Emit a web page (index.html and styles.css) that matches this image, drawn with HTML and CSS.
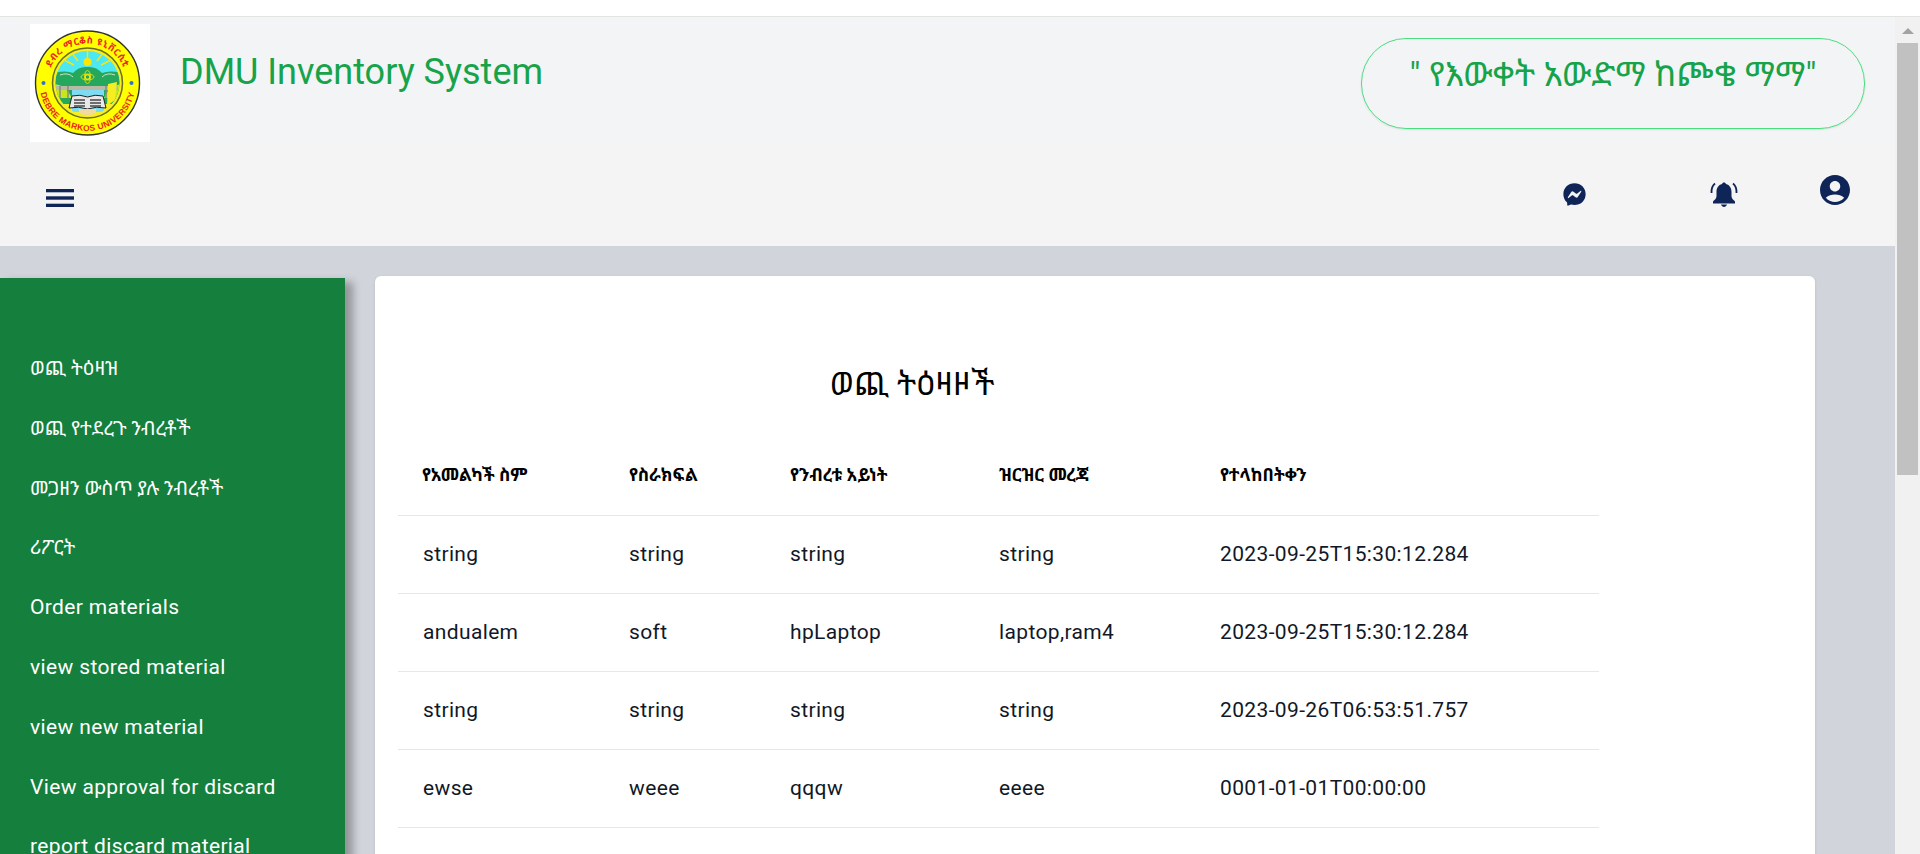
FILE: index.html
```html
<!DOCTYPE html>
<html lang="am">
<head>
<meta charset="utf-8">
<title>DMU Inventory System</title>
<link rel="stylesheet" href="styles.css">
</head>
<body>
<div class="topstrip"></div>
<div class="frame">
  <div class="page">
    <header class="header">
      <div class="brand">
        <div class="brand-left">
          <svg class="logo" viewBox="0 0 120 118" aria-label="Debre Markos University logo">
            <rect width="120" height="118" fill="#fff"/>
            <defs>
              <path id="arcTop" d="M18 59a39.500 39.500 0 0 1 79 0"/>
              <path id="arcBottom" d="M9.500 59a48 48 0 0 0 96 0"/>
              <clipPath id="inner"><circle cx="57.500" cy="59" r="32"/></clipPath>
            </defs>
            <circle cx="57.500" cy="59" r="52" fill="#ffff00" stroke="#333" stroke-width="1.400"/>
            <circle cx="57.500" cy="59" r="35" fill="#f5ee20" stroke="#6b6b2a" stroke-width="1.500"/>
            <g clip-path="url(#inner)">
              <rect x="24" y="24" width="68" height="36" fill="#4ee8f2"/>
              <circle cx="57.500" cy="38" r="4" fill="#ffe600"/>
              <path d="M57.500 35V27M48 37l-6-8M67 37l6-8M44 41l-10-5M71 41l10-5" stroke="#ffe600" stroke-width="1.400"/>
              <path d="M24 49q12-3 19 0q6-7 14.500-6q8.500-1 14.500 6q8-3 20 0v31H24z" fill="#25a85c"/>
              <path d="M24 60q12 1 18 14H24zM92 60q-12 1-18 14h18z" fill="#c8e620"/>
              <path d="M30 51q8-3 13 2M85 51q-8-3-13 2" stroke="#e8f8e8" stroke-width=".8" fill="none"/>
              <circle cx="57.500" cy="53" r="2.300" fill="none" stroke="#ffe600" stroke-width="1.200"/>
              <ellipse cx="57.500" cy="53" rx="6.500" ry="3" fill="none" stroke="#ffe600" stroke-width=".8"/>
              <ellipse cx="57.500" cy="53" rx="3" ry="6.500" fill="none" stroke="#ffe600" stroke-width=".8"/>
              <rect x="26" y="62" width="62" height="4" fill="#b9b9a8"/>
              <path d="M30 62v12M38 62v12M76 62v12M84 62v12" stroke="#888" stroke-width="1.500"/>
              <rect x="42" y="66" width="32" height="22" fill="#7fdcf0"/>
              <path d="M78 60l9-2-2 18-8 6z" fill="#f5ee20"/>
              <path d="M39 84l3-12q8-2 15.500 1q7.500-3 15.500-1l3 12q-10-2-18.500 1q-8.500-3-18.500-1z" fill="#e8e8e8" stroke="#222" stroke-width="1"/>
              <path d="M44 76h11M44 79h11M44 82h11M60 76h11M60 79h11M60 82h11" stroke="#444" stroke-width="1.500"/>
              <rect x="49" y="85" width="17" height="6" fill="#f1d9a4"/>
            </g>
            <circle cx="13.500" cy="59" r="2" fill="#2f6fd8"/>
            <circle cx="101.500" cy="59" r="2" fill="#2f6fd8"/>
            <text class="logo-text"><textPath href="#arcTop" startOffset="50%" text-anchor="middle">ደብረ ማርቆስ ዩኒቨርሲቲ</textPath></text>
            <text class="logo-text logo-latin"><textPath href="#arcBottom" startOffset="50%" text-anchor="middle">DEBRE MARKOS UNIVERSITY</textPath></text>
          </svg>
          <h1 class="title">DMU Inventory System</h1>
        </div>
        <div class="motto">" የእውቀት አውድማ ከጮቄ ማማ"</div>
      </div>
      <nav class="nav">
        <svg class="menu-icon" viewBox="0 0 28 18" aria-label="menu">
          <rect width="28" height="3.300" fill="#0f2557"/>
          <rect y="7.300" width="28" height="3.400" fill="#0f2557"/>
          <rect y="14.700" width="28" height="3.300" fill="#0f2557"/>
        </svg>
        <div class="nav-icons">
          <svg class="ic-msg" viewBox="0 0 512 512" aria-label="messages"><path fill="#0f2557" d="M256.55 8C116.52 8 8 110.34 8 248.57c0 72.3 29.71 134.78 78.07 177.94 8.35 7.51 6.63 11.86 8.05 58.23A19.92 19.92 0 0 0 122 502.31c52.91-23.3 53.59-25.14 62.56-22.7C337.85 521.8 504 423.7 504 248.57 504 110.34 396.59 8 256.55 8zm149.24 185.13l-73 115.57a37.37 37.37 0 0 1-53.91 9.93l-58.08-43.47a15 15 0 0 0-18 0l-78.37 59.44c-10.46 7.93-24.16-4.6-17.11-15.67l73-115.57a37.36 37.36 0 0 1 53.91-9.93l58.06 43.46a15 15 0 0 0 18 0l78.41-59.38c10.44-7.98 24.14 4.54 17.09 15.62z"/></svg>
          <svg class="ic-bell" viewBox="0 0 28 25" aria-label="notifications">
            <path fill="#0f2557" d="M14 .5c-1 0-1.800.6-2 1.500-3.700 1-5.500 4-5.500 8v4c0 2.500-2 4-3.500 5.500v2h22v-2c-1.500-1.500-3.500-3-3.500-5.500v-4c0-4-1.800-7-5.500-8-.2-.9-1-1.500-2-1.500z"/>
            <path fill="#0f2557" d="M11 22.500h6c-.5 1.500-1.700 2.500-3 2.500s-2.500-1-3-2.500z"/>
            <path fill="none" stroke="#0f2557" stroke-width="1.800" d="M5 1.500C2.500 3.500 1.300 7 1.500 11M23 1.500c2.500 2 3.700 5.500 3.500 9.500"/>
          </svg>
          <svg class="ic-user" viewBox="2 2 20 20" aria-label="account"><path fill="#0f2557" d="M12 2C6.480 2 2 6.480 2 12s4.480 10 10 10 10-4.480 10-10S17.520 2 12 2zm0 4c1.930 0 3.500 1.570 3.500 3.500S13.930 13 12 13s-3.500-1.570-3.500-3.500S10.070 6 12 6zm0 14c-2.030 0-4.430-.82-6.140-2.880C7.550 15.800 9.680 15 12 15s4.450.8 6.140 2.120C16.430 19.180 14.030 20 12 20z"/></svg>
        </div>
      </nav>
    </header>
    <div class="main">
      <aside class="sidebar">
        <ul class="side-list">
          <li class="side-am">ወጪ ትዕዛዝ</li>
          <li class="side-am">ወጪ የተደረጉ ንብረቶች</li>
          <li class="side-am">መጋዘን ውስጥ ያሉ ንብረቶች</li>
          <li class="side-am">ሪፖርት</li>
          <li>Order materials</li>
          <li>view stored material</li>
          <li>view new material</li>
          <li>View approval for discard</li>
          <li>report discard material</li>
        </ul>
      </aside>
      <section class="card">
        <h2 class="card-title">ወጪ ትዕዛዞች</h2>
        <table class="orders">
          <thead>
            <tr><th>የአመልካች ስም</th><th>የስራክፍል</th><th>የንብረቱ አይነት</th><th>ዝርዝር መረጃ</th><th>የተላከበትቀን</th></tr>
          </thead>
          <tbody>
            <tr><td>string</td><td>string</td><td>string</td><td>string</td><td>2023-09-25T15:30:12.284</td></tr>
            <tr><td>andualem</td><td>soft</td><td>hpLaptop</td><td>laptop,ram4</td><td>2023-09-25T15:30:12.284</td></tr>
            <tr><td>string</td><td>string</td><td>string</td><td>string</td><td>2023-09-26T06:53:51.757</td></tr>
            <tr><td>ewse</td><td>weee</td><td>qqqw</td><td>eeee</td><td>0001-01-01T00:00:00</td></tr>
          </tbody>
        </table>
      </section>
    </div>
  </div>
  <div class="scrollbar">
    <div class="scroll-arrow"></div>
    <div class="scroll-thumb"></div>
  </div>
</div>
</body>
</html>
```
FILE: styles.css
```css
* { box-sizing: border-box; }
html, body { margin: 0; height: 854px; overflow: hidden; }
body {
  background: #fff;
  font-family: Roboto, "Noto Sans", "Noto Sans Ethiopic", "Liberation Sans", sans-serif;
  color: #111827;
}
.topstrip { height: 17px; background: #fff; border-bottom: 1px solid #e2e4e2; }
.frame { display: flex; height: 837px; overflow: hidden; }
.page { flex: 1; min-width: 0; background: #d1d5db; overflow: hidden; }
.header { height: 229px; background: #f4f4f5; display: flex; flex-direction: column; }
.brand {
  height: 128px;
  padding: 7px 30px 0 30px;
  background: #f3f4f6;
  display: flex;
  justify-content: space-between;
  align-items: flex-start;
}
.brand-left { display: flex; align-items: flex-start; }
.logo { width: 120px; height: 118px; display: block; flex: none; }
.logo-text { font-size: 9.500px; font-weight: 700; fill: #e8261c; letter-spacing: .6px; }
.logo-latin { font-family: "Liberation Sans", sans-serif; font-size: 8.500px; letter-spacing: .3px; }
.title {
  margin: 28px 0 0 30px;
  font-size: 36px;
  line-height: 40px;
  font-weight: 400;
  color: #16a34a;
}
.motto {
  margin: 14px 0 0 0;
  width: 504px;
  height: 91px;
  border: 1px solid #4ade80;
  border-radius: 45px;
  box-shadow: 0 1px 2px rgba(0,0,0,.08);
  color: #16a34a;
  font-size: 34px;
  line-height: 36px;
  text-align: center;
  padding-top: 17px;
}
.nav { flex: 1; display: flex; justify-content: space-between; padding: 44px 45px 0 46px; }
.menu-icon { width: 28px; height: 18px; display: block; }
.nav-icons { display: flex; align-items: flex-start; margin-top: -44px; }
.ic-msg { width: 23px; height: 23px; margin-top: 38px; display: block; }
.ic-bell { width: 28px; height: 25px; margin: 37px 0 0 124px; display: block; }
.ic-user { width: 30px; height: 30px; margin: 30px 0 0 82px; display: block; }
.main { display: flex; align-items: flex-start; padding-top: 30px; }
.sidebar {
  width: 345px;
  height: 620px;
  margin-top: 2px;
  flex: none;
  background: #15803d;
  box-shadow: 8px 4px 8px rgba(0,0,0,.3);
  padding-top: 61px;
}
.side-list { list-style: none; margin: 0; padding: 0 0 0 30px; }
.side-list li { height: 59.800px; line-height: 59.800px; font-size: 21px; letter-spacing: .36px; color: #fff; white-space: nowrap; }
.side-list .side-am { font-size: 19.500px; letter-spacing: 0; }
.card {
  width: 1440px;
  height: 620px;
  margin-left: 30px;
  background: #fff;
  border-radius: 6px;
  box-shadow: 0 1px 3px rgba(0,0,0,.12);
  padding: 0 0 0 23px;
}
.card-title {
  margin: 0;
  width: 1028px;
  padding-top: 85px;
  height: 171px;
  font-size: 32px;
  line-height: 46px;
  font-weight: 400;
  color: #000;
  text-align: center;
}
.orders { width: 1201px; border-collapse: collapse; table-layout: fixed; }
.orders th:nth-child(1) { width: 207px; }
.orders th:nth-child(2) { width: 161px; }
.orders th:nth-child(3) { width: 209px; }
.orders th:nth-child(4) { width: 221px; }
.orders th, .orders td { padding: 0 0 0 24px; text-align: left; border-bottom: 1px solid #e5e7eb; white-space: nowrap; }
.orders th { height: 68px; padding-bottom: 14px; font-size: 17.500px; font-weight: 700; color: #000; }
.orders td { height: 78px; font-size: 21px; letter-spacing: .36px; color: #111827; }
.orders td:first-child { padding-left: 25px; }
.scrollbar { width: 25px; flex: none; background: #f1f1f1; padding: 0 2px; }
.scroll-arrow { width: 0; height: 0; margin: 11px auto 9px; border-left: 6px solid transparent; border-right: 6px solid transparent; border-bottom: 6px solid #a3a3a3; }
.scroll-thumb { height: 432px; background: #c1c1c1; }
```
